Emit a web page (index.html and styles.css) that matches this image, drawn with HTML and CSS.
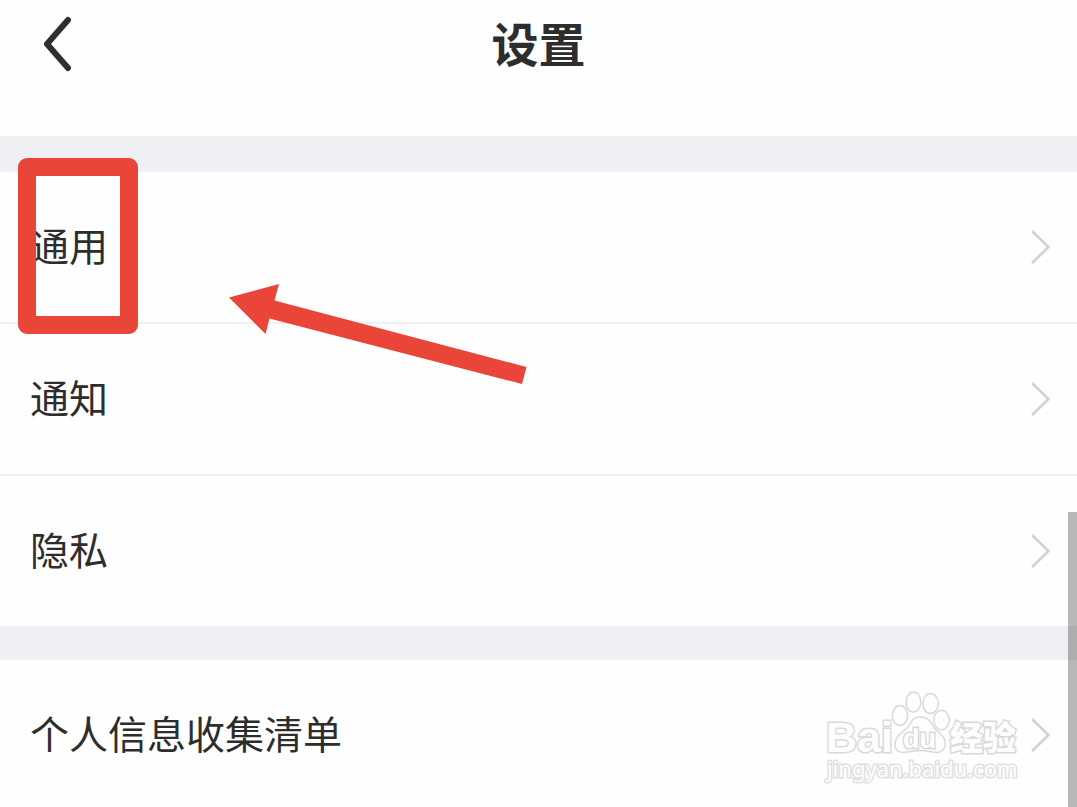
FILE: index.html
```html
<!DOCTYPE html>
<html lang="zh-CN">
<head>
<meta charset="utf-8">
<meta name="viewport" content="width=device-width, initial-scale=1">
<title>设置</title>
<link rel="stylesheet" href="styles.css">
</head>
<body>
<header class="header">
  <button class="back" type="button" aria-label="返回">
    <svg width="32" height="58" viewBox="0 0 32 58" fill="none" stroke="#2f2f2f" stroke-width="6" stroke-linecap="round" stroke-linejoin="round"><path d="M28 5L7 29L28 53"/></svg>
  </button>
  <h1 class="title">设置</h1>
</header>
<main class="settings">
  <nav class="group">
    <a class="row" href="#general"><span class="label">通用</span><svg class="chevron" viewBox="0 0 20 34"><path d="M1 1L17.500 17L1 33"/></svg></a>
    <a class="row" href="#notice"><span class="label">通知</span><svg class="chevron" viewBox="0 0 20 34"><path d="M1 1L17.500 17L1 33"/></svg></a>
    <a class="row" href="#privacy"><span class="label">隐私</span><svg class="chevron" viewBox="0 0 20 34"><path d="M1 1L17.500 17L1 33"/></svg></a>
  </nav>
  <nav class="group">
    <a class="row" href="#collection"><span class="label">个人信息收集清单</span><svg class="chevron" viewBox="0 0 20 34"><path d="M1 1L17.500 17L1 33"/></svg></a>
  </nav>
</main>
<div class="highlight"></div>
<svg class="arrow" width="298" height="102" viewBox="0 0 298 102"><path fill="#e94538" d="M0 13.500L50 0L45.500 16.500L297.500 83L293 100L40.500 34.500L36.500 50Z"/></svg>
<svg class="watermark" width="200" height="100" viewBox="0 0 200 100" role="img" aria-label="Baidu 经验">
  <g class="outline">
    <text class="brand" x="2" y="64">Bai</text>
    <ellipse cx="76" cy="27.500" rx="7.700" ry="10"/>
    <ellipse cx="89.500" cy="14" rx="7.300" ry="10"/>
    <ellipse cx="106.500" cy="15.500" rx="7.700" ry="10"/>
    <ellipse cx="117.500" cy="32" rx="7.700" ry="9.700"/>
    <path d="M96 29C89 29 87 34 84 39C78 45 71 48 71 56C71 64 76 65 83 64C92 62 101 62 109 64C118 66 122 61 121 53C120 47 113 44 109 38C106 32 103 29 96 29Z"/>
    <text class="du" x="79" y="60">du</text>
    <text class="product" x="126" y="62">经验</text>
    <text class="site" x="3" y="89">jingyan.baidu.com</text>
  </g>
</svg>
<div class="thumb"></div>
</body>
</html>
```
FILE: styles.css
```css
* { box-sizing: border-box; }
html { scrollbar-width: none; }
body {
  margin: 0;
  position: relative;
  background: #fefefe;
  color: #2d2d2d;
  font-family: "Noto Sans CJK SC", sans-serif;
}
.header {
  display: grid;
  grid-template-columns: 80px 1fr 80px;
  align-items: start;
  height: 136px;
  padding-top: 12px;
}
.back {
  display: flex;
  justify-self: end;
  margin: 3px 8px 0 0;
  padding: 0;
  border: 0;
  background: none;
}
.title {
  margin: 0;
  font-size: 47px;
  line-height: 60px;
  font-weight: 700;
  text-align: center;
}
.group { border-top: 36px solid #eff0f3; }
.group + .group { border-top-width: 34px; }
.row {
  display: flex;
  align-items: center;
  justify-content: space-between;
  padding: 46px 26px 46px 30px;
  color: inherit;
  font-size: 39px;
  line-height: 52px;
  text-decoration: none;
}
.row + .row { border-top: 2px solid #eeeff0; }
.label { padding-bottom: 6px; }
.chevron {
  width: 20px;
  height: 34px;
  fill: none;
  stroke: #d2d2d2;
  stroke-width: 2.5;
}
.highlight {
  position: absolute;
  left: 18px;
  top: 158px;
  width: 120px;
  height: 176px;
  border: 18px solid #e94538;
  border-radius: 9px;
}
.arrow {
  position: absolute;
  left: 229px;
  top: 284px;
}
.watermark {
  position: absolute;
  right: 53px;
  top: 688px;
}
.outline {
  fill: #fefefe;
  stroke: #d9d9d9;
  stroke-width: 1.5;
}
.outline text {
  font-family: "Noto Sans", "Noto Sans CJK SC", sans-serif;
  stroke-width: 3;
  paint-order: stroke;
}
.outline .brand { font-family: "Liberation Sans", sans-serif; font-size: 43px; font-weight: 700; }
.outline .du { font-family: "Liberation Sans", sans-serif; font-size: 27px; font-weight: 700; }
.outline .product { font-family: "Noto Sans CJK SC", sans-serif; font-size: 33px; font-weight: 900; }
.outline .site { font-size: 22px; stroke: #e0e0e0; }
.thumb {
  position: fixed;
  right: 0;
  top: 512px;
  bottom: 0;
  width: 9px;
  background: rgba(0, 0, 0, 0.28);
}
```
